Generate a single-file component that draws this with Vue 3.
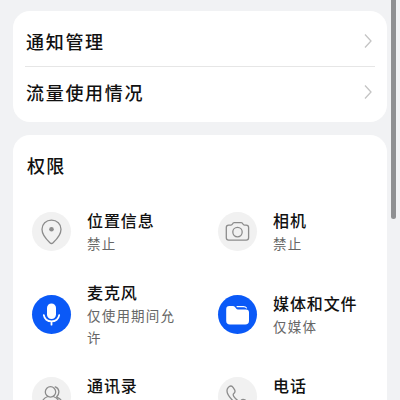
<script setup>
const links = ['通知管理', '流量使用情况']
const permissions = [
  { icon: 'pin', title: '位置信息', state: '禁止' },
  { icon: 'camera', title: '相机', state: '禁止' },
  { icon: 'mic', title: '麦克风', state: '仅使用期间允许', on: true },
  { icon: 'folder', title: '媒体和文件', state: '仅媒体', on: true },
  { icon: 'contacts', title: '通讯录', state: '' },
  { icon: 'phone', title: '电话', state: '' },
]
</script>

<template>
  <div class="screen">
    <section class="card links">
      <div v-for="label in links" :key="label" class="link">
        <span class="heading">{{ label }}</span>
        <svg class="chevron" width="10" height="16" viewBox="0 0 10 16"><path d="M2 1.5 8 8 2 14.5" /></svg>
      </div>
    </section>
    <section class="card permissions">
      <h2 class="heading">权限</h2>
      <div class="grid">
        <div v-for="item in permissions" :key="item.title" class="item">
          <div class="badge" :class="{ on: item.on }">
            <svg v-if="item.icon === 'pin'" width="39" height="39" viewBox="0 0 39 39">
              <path d="M19.5 8.2c-5.500 0-9.500 4-9.500 9.100 0 5.800 4.400 10.200 7.900 13.400q1.600 1.500 3.200 0C24.600 27.500 29 23.100 29 17.300c0-5.100-4-9.100-9.500-9.100Z" />
              <circle class="solid" cx="19.500" cy="17.300" r="2.300" />
            </svg>
            <svg v-else-if="item.icon === 'camera'" width="39" height="39" viewBox="0 0 39 39">
              <path d="M10.700 13.100h2.200q1.100 0 1.500-1l.2-.4q.4-1.100 1.600-1.100h7q1.200 0 1.600 1.100l.2.4q.4 1 1.500 1h1.700q2.400 0 2.400 2.400v10.300q0 2.400-2.400 2.400H10.700q-2.400 0-2.400-2.400V15.500q0-2.400 2.400-2.400Z" />
              <circle cx="19.500" cy="20.100" r="4.700" />
            </svg>
            <svg v-else-if="item.icon === 'mic'" width="39" height="39" viewBox="0 0 39 39">
              <rect class="solid" x="15" y="8.500" width="9" height="15.500" rx="4.500" />
              <path class="thick" d="M11.800 20.200c.6 3.700 3.700 6.200 7.700 6.200s7.100-2.500 7.700-6.200M19.500 26.400v3.300" />
            </svg>
            <svg v-else-if="item.icon === 'folder'" width="39" height="39" viewBox="0 0 39 39">
              <path class="solid" d="M8.200 14.200q0-3.200 3.200-3.200h3.400q1.400 0 2.200 1.100l1.100 1.500q.7.900 1.900.9h8q3 0 3 3v8.200q0 3.800-3.800 3.800H12q-3.800 0-3.800-3.800Z" />
              <path class="lid" d="M19 11.600h6.500q2.200 0 3 1.400" />
            </svg>
            <svg v-else-if="item.icon === 'contacts'" width="39" height="39" viewBox="0 0 39 39">
              <circle cx="18.500" cy="14.900" r="5.200" />
              <path d="M23.300 9.800c4.200 1.500 4.700 6.800 1.400 9.900M15.800 19.500c-3.900 1.300-5.700 4-5.700 7.200 0 3 17.100 3 17.100 0 0-3.200-2-5.900-5.900-7.200M25.300 20.300c3.200 1.300 4.800 3.700 4.800 6.400" />
            </svg>
            <svg v-else width="39" height="39" viewBox="0 0 39 39">
              <path d="M10.300 10.400c1.800-2 3.600-1.800 4.900.2l1.300 2c1 1.600.6 2.700-.7 3.900-1 .9-.7 1.900.1 3.100 1 1.500 2.300 2.800 3.900 3.900 1.200.8 2.200 1 3.100 0 1.200-1.300 2.300-1.600 3.900-.6l2 1.300c2 1.300 2.200 3.100.2 4.900-2.900 2.600-7.100 1-12.300-3.700-6.600-6-9.600-11.400-6.400-15Z" />
            </svg>
          </div>
          <div class="text">
            <div class="title">{{ item.title }}</div>
            <div class="state">{{ item.state }}</div>
          </div>
        </div>
      </div>
    </section>
    <div class="scrollbar"></div>
  </div>
</template>

<style>
body {
  background: #f1f2f4;
  overflow: hidden;
}
</style>

<style scoped>
.screen {
  position: relative;
  box-sizing: border-box;
  height: 400px;
  padding: 11px 13px 0;
  overflow: hidden;
  background: #f1f2f4;
  font-family: "Noto Sans CJK SC", sans-serif;
  color: #111;
}
.card {
  background: #fff;
  border-radius: 17px;
}
.links {
  box-sizing: border-box;
  height: 111px;
  padding: 4px 12px 0;
}
.link {
  display: flex;
  align-items: center;
  justify-content: space-between;
  height: 51px;
  padding: 0 2px 0 1px;
}
.link + .link {
  height: 50px;
  border-top: 1px solid #e6e6e6;
}
.heading {
  margin: 0;
  font-size: 18px;
  line-height: 26px;
  font-weight: 500;
  letter-spacing: 1.700px;
}
.chevron path {
  fill: none;
  stroke: #c4c4c4;
  stroke-width: 1.300;
}
.permissions {
  margin-top: 13px;
  height: 310px;
  padding: 17px 0 0 14px;
  box-sizing: border-box;
}
.permissions .heading {
  letter-spacing: 1.200px;
}
.grid {
  display: grid;
  grid-template-columns: 186px 186px;
  grid-auto-rows: 82.700px;
  margin-top: 12px;
}
.item {
  display: flex;
  align-items: center;
  gap: 16px;
  padding-left: 5px;
}
.badge {
  flex: none;
  width: 39px;
  height: 39px;
  border-radius: 50%;
  background: #f1f1f1;
  color: #8c8c8c;
}
.badge.on {
  background: #0a59f7;
  color: #fff;
}
.badge svg {
  display: block;
  fill: none;
  stroke: currentColor;
  stroke-width: 1.300;
  stroke-linecap: round;
  stroke-linejoin: round;
}
.badge .solid {
  fill: currentColor;
  stroke: none;
}
.badge .thick {
  stroke-width: 1.800;
}
.badge .lid {
  stroke-width: 1.100;
}
.text {
  width: 98px;
}
.title {
  margin-bottom: 1px;
  font-size: 16px;
  line-height: 24px;
  font-weight: 500;
  letter-spacing: 0.900px;
  white-space: nowrap;
}
.state {
  min-height: 21.500px;
  font-size: 13.500px;
  line-height: 21.500px;
  letter-spacing: 1.200px;
  color: #666;
}
.scrollbar {
  position: absolute;
  top: -10px;
  right: 4px;
  width: 5px;
  height: 229px;
  border-radius: 3px;
  background: #8f9092;
}
</style>
